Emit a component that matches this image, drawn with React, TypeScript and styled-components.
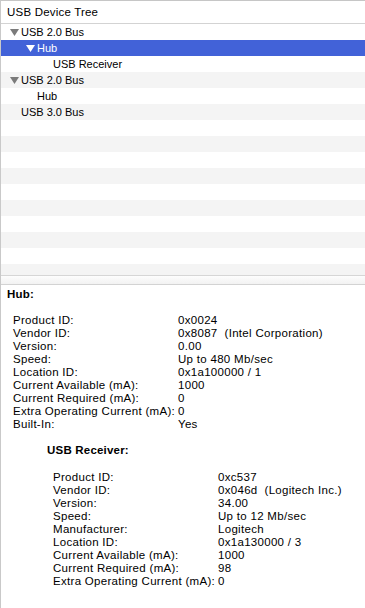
import React from "react";
import styled, { createGlobalStyle } from "styled-components";

const GlobalStyle = createGlobalStyle`
  html, body {
    margin: 0;
    padding: 0;
    background: #fff;
    overflow: hidden;
  }
  body {
    font-family: "Liberation Sans", Arial, sans-serif;
    color: #000;
  }
`;

const Window = styled.div`
  width: 365px;
  height: 608px;
  box-sizing: border-box;
  border-left: 1px solid #c9c9c9;
  border-top: 1px solid #c6c6c6;
  display: flex;
  flex-direction: column;
  overflow: hidden;
`;

const TreeHeader = styled.div`
  height: 22px;
  border-bottom: 1px solid #d3d3d3;
  display: flex;
  align-items: center;
  padding-left: 6px;
  font-size: 11.5px;
  letter-spacing: 0.2px;
`;

const TreeBody = styled.div`
  height: 251px;
  overflow: hidden;
  display: flex;
  flex-direction: column;
`;

const Row = styled.div<{ $striped: boolean; $selected?: boolean; $level: number }>`
  flex: none;
  height: 16px;
  display: flex;
  align-items: center;
  font-size: 11px;
  padding-left: ${(p) => 9 + p.$level * 16}px;
  background: ${(p) => (p.$selected ? "#4262d8" : p.$striped ? "#f4f4f4" : "#fff")};
  color: ${(p) => (p.$selected ? "#fff" : "#000")};
`;

const Disclosure = styled.span`
  width: 11px;
  height: 16px;
  flex: none;
  display: flex;
  align-items: center;
`;

const Divider = styled.div`
  height: 8px;
  border-top: 1px solid #d6d6d6;
  border-bottom: 1px solid #d3d3d3;
  background: linear-gradient(#fdfdfd, #f2f2f2);
`;

const Details = styled.div`
  padding: 3px 0 0 0;
  font-size: 11.5px;
  line-height: 13px;
  letter-spacing: 0.3px;
`;

const Section = styled.div<{ $indent: number }>`
  padding-left: ${(p) => p.$indent}px;
  margin-bottom: 13px;
`;

const SectionTitle = styled.div<{ $gap: number }>`
  font-weight: bold;
  letter-spacing: 0.2px;
  margin-bottom: ${(p) => p.$gap}px;
`;

const Props = styled.div`
  display: grid;
  grid-template-columns: 165px auto;
  padding-left: 6px;
`;

const Value = styled.span`
  white-space: pre;
`;

type Node = { label: string; level: number; open?: boolean; selected?: boolean };

const nodes: Node[] = [
  { label: "USB 2.0 Bus", level: 0, open: true },
  { label: "Hub", level: 1, open: true, selected: true },
  { label: "USB Receiver", level: 2 },
  { label: "USB 2.0 Bus", level: 0, open: true },
  { label: "Hub", level: 1 },
  { label: "USB 3.0 Bus", level: 0 },
];

const hubProps: [string, string][] = [
  ["Product ID:", "0x0024"],
  ["Vendor ID:", "0x8087  (Intel Corporation)"],
  ["Version:", "0.00"],
  ["Speed:", "Up to 480 Mb/sec"],
  ["Location ID:", "0x1a100000 / 1"],
  ["Current Available (mA):", "1000"],
  ["Current Required (mA):", "0"],
  ["Extra Operating Current (mA):", "0"],
  ["Built-In:", "Yes"],
];

const receiverProps: [string, string][] = [
  ["Product ID:", "0xc537"],
  ["Vendor ID:", "0x046d  (Logitech Inc.)"],
  ["Version:", "34.00"],
  ["Speed:", "Up to 12 Mb/sec"],
  ["Manufacturer:", "Logitech"],
  ["Location ID:", "0x1a130000 / 3"],
  ["Current Available (mA):", "1000"],
  ["Current Required (mA):", "98"],
  ["Extra Operating Current (mA):", "0"],
];

function Triangle({ color }: { color: string }) {
  return (
    <svg width="9" height="7" viewBox="0 0 9 7">
      <polygon points="0,0 9,0 4.5,7" fill={color} />
    </svg>
  );
}

function PropList({ items }: { items: [string, string][] }) {
  return (
    <Props>
      {items.map(([k, v]) => (
        <React.Fragment key={k}>
          <span>{k}</span>
          <Value>{v}</Value>
        </React.Fragment>
      ))}
    </Props>
  );
}

export default function App() {
  const fillers = Array.from({ length: 10 }, (_, i) => i + nodes.length);
  return (
    <>
      <GlobalStyle />
      <Window>
        <TreeHeader>USB Device Tree</TreeHeader>
        <TreeBody>
          {nodes.map((n, i) => (
            <Row key={i} $striped={i % 2 === 1} $selected={n.selected} $level={n.level}>
              <Disclosure>
                {n.open && <Triangle color={n.selected ? "#fff" : "#7b7b7b"} />}
              </Disclosure>
              {n.label}
            </Row>
          ))}
          {fillers.map((i) => (
            <Row key={i} $striped={i % 2 === 1} $level={0} />
          ))}
        </TreeBody>
        <Divider />
        <Details>
          <Section $indent={6}>
            <SectionTitle $gap={13}>Hub:</SectionTitle>
            <PropList items={hubProps} />
          </Section>
          <Section $indent={46}>
            <SectionTitle $gap={14}>USB Receiver:</SectionTitle>
            <PropList items={receiverProps} />
          </Section>
        </Details>
      </Window>
    </>
  );
}
